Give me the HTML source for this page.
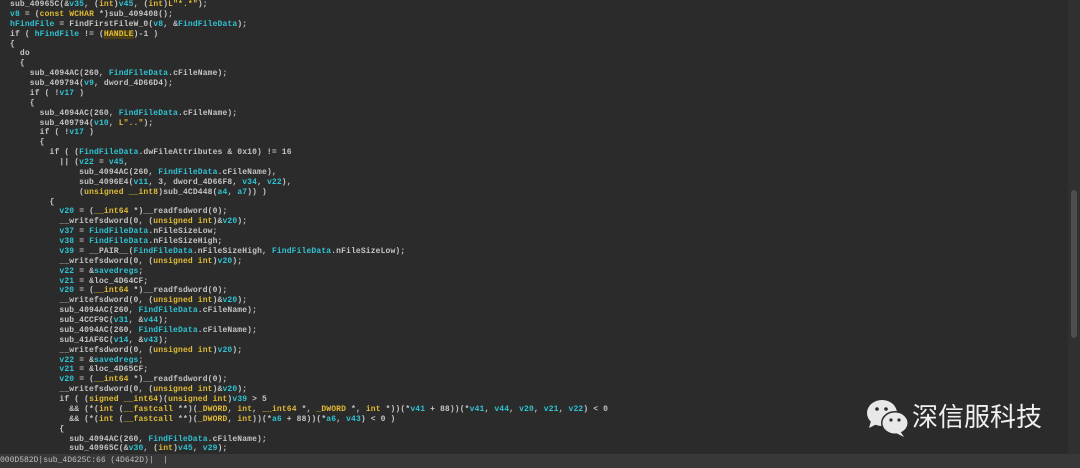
<!DOCTYPE html>
<html><head><meta charset="utf-8"><style>
html,body{margin:0;padding:0;width:1080px;height:468px;overflow:hidden;background:#2b2b2b;}
#code{position:absolute;left:10px;top:0;font-family:"Liberation Mono",monospace;font-size:8px;line-height:9.87px;color:#c4c4c4;white-space:pre;font-weight:bold;letter-spacing:0.14px;}
.c{color:#2fc3d3}.k{color:#e0bb34}.h{color:#e0bb34;background:#4a3e1a}
#sb{position:absolute;right:0;top:0;width:12px;height:454px;background:#303030;}
#th{position:absolute;right:3px;top:190px;width:6px;height:148px;background:#4e4e4e;border-radius:3px;}
#st{position:absolute;left:0;top:454px;width:1080px;height:14px;background:#383838;font-family:"Liberation Mono",monospace;font-size:8px;line-height:14px;color:#c0c0c0;white-space:pre;}
#wm{position:absolute;left:866px;top:398px;}
#wt{position:absolute;left:912px;top:401px;font-family:"Liberation Sans","Noto Sans CJK SC",sans-serif;font-size:26px;color:#f0f0f0;line-height:32px;}
</style></head><body>
<div id="code">sub_40965C(&amp;<span class="c">v35</span>, (<span class="k">int</span>)<span class="c">v45</span>, (<span class="k">int</span>)<span class="k">L"*.*"</span>);
<span class="c">v8</span> = (<span class="k">const WCHAR</span> *)sub_409408();
<span class="c">hFindFile</span> = FindFirstFileW_0(<span class="c">v8</span>, &amp;<span class="c">FindFileData</span>);
if ( <span class="c">hFindFile</span> != (<span class="h">HANDLE</span>)-1 )
{
  do
  {
    sub_4094AC(260, <span class="c">FindFileData</span>.cFileName);
    sub_409794(<span class="c">v9</span>, dword_4D66D4);
    if ( !<span class="c">v17</span> )
    {
      sub_4094AC(260, <span class="c">FindFileData</span>.cFileName);
      sub_409794(<span class="c">v10</span>, <span class="k">L".."</span>);
      if ( !<span class="c">v17</span> )
      {
        if ( (<span class="c">FindFileData</span>.dwFileAttributes &amp; 0x10) != 16
          || (<span class="c">v22</span> = <span class="c">v45</span>,
              sub_4094AC(260, <span class="c">FindFileData</span>.cFileName),
              sub_4096E4(<span class="c">v11</span>, 3, dword_4D66F8, <span class="c">v34</span>, <span class="c">v22</span>),
              (<span class="k">unsigned __int8</span>)sub_4CD448(<span class="c">a4</span>, <span class="c">a7</span>)) )
        {
          <span class="c">v20</span> = (<span class="k">__int64</span> *)__readfsdword(0);
          __writefsdword(0, (<span class="k">unsigned int</span>)&amp;<span class="c">v20</span>);
          <span class="c">v37</span> = <span class="c">FindFileData</span>.nFileSizeLow;
          <span class="c">v38</span> = <span class="c">FindFileData</span>.nFileSizeHigh;
          <span class="c">v39</span> = __PAIR__(<span class="c">FindFileData</span>.nFileSizeHigh, <span class="c">FindFileData</span>.nFileSizeLow);
          __writefsdword(0, (<span class="k">unsigned int</span>)<span class="c">v20</span>);
          <span class="c">v22</span> = &amp;<span class="c">savedregs</span>;
          <span class="c">v21</span> = &amp;loc_4D64CF;
          <span class="c">v20</span> = (<span class="k">__int64</span> *)__readfsdword(0);
          __writefsdword(0, (<span class="k">unsigned int</span>)&amp;<span class="c">v20</span>);
          sub_4094AC(260, <span class="c">FindFileData</span>.cFileName);
          sub_4CCF9C(<span class="c">v31</span>, &amp;<span class="c">v44</span>);
          sub_4094AC(260, <span class="c">FindFileData</span>.cFileName);
          sub_41AF6C(<span class="c">v14</span>, &amp;<span class="c">v43</span>);
          __writefsdword(0, (<span class="k">unsigned int</span>)<span class="c">v20</span>);
          <span class="c">v22</span> = &amp;<span class="c">savedregs</span>;
          <span class="c">v21</span> = &amp;loc_4D65CF;
          <span class="c">v20</span> = (<span class="k">__int64</span> *)__readfsdword(0);
          __writefsdword(0, (<span class="k">unsigned int</span>)&amp;<span class="c">v20</span>);
          if ( (<span class="k">signed __int64</span>)(<span class="k">unsigned int</span>)<span class="c">v39</span> &gt; 5
            &amp;&amp; (*(<span class="k">int</span> (<span class="k">__fastcall</span> **)(<span class="k">_DWORD</span>, <span class="k">int</span>, <span class="k">__int64</span> *, <span class="k">_DWORD</span> *, <span class="k">int</span> *))(*<span class="c">v41</span> + 88))(*<span class="c">v41</span>, <span class="c">v44</span>, <span class="c">v20</span>, <span class="c">v21</span>, <span class="c">v22</span>) &lt; 0
            &amp;&amp; (*(<span class="k">int</span> (<span class="k">__fastcall</span> **)(<span class="k">_DWORD</span>, <span class="k">int</span>))(*<span class="c">a6</span> + 88))(*<span class="c">a6</span>, <span class="c">v43</span>) &lt; 0 )
          {
            sub_4094AC(260, <span class="c">FindFileData</span>.cFileName);
            sub_40965C(&amp;<span class="c">v30</span>, (<span class="k">int</span>)<span class="c">v45</span>, <span class="c">v29</span>);</div>
<div id="sb"><div id="th"></div></div>
<div id="st">000D582D|sub_4D625C:66 (4D642D)|  |</div>
<div id="wm"><svg width="44" height="40" viewBox="0 0 44 40">
<ellipse cx="16" cy="15" rx="15" ry="13" fill="#e8e8e8"/>
<path d="M5 23 L3 30 L11 26 Z" fill="#e8e8e8"/>
<circle cx="11" cy="11" r="1.8" fill="#2b2b2b"/><circle cx="20" cy="11" r="1.8" fill="#2b2b2b"/>
<ellipse cx="29" cy="25" rx="14" ry="12" fill="#2b2b2b"/>
<ellipse cx="29" cy="25" rx="12.5" ry="10.5" fill="#e8e8e8"/>
<path d="M34 33 L38 39 L30 35 Z" fill="#e8e8e8"/>
<circle cx="25" cy="22" r="1.6" fill="#2b2b2b"/><circle cx="33" cy="22" r="1.6" fill="#2b2b2b"/>
</svg></div>
<div id="wt">深信服科技</div>
</body></html>
